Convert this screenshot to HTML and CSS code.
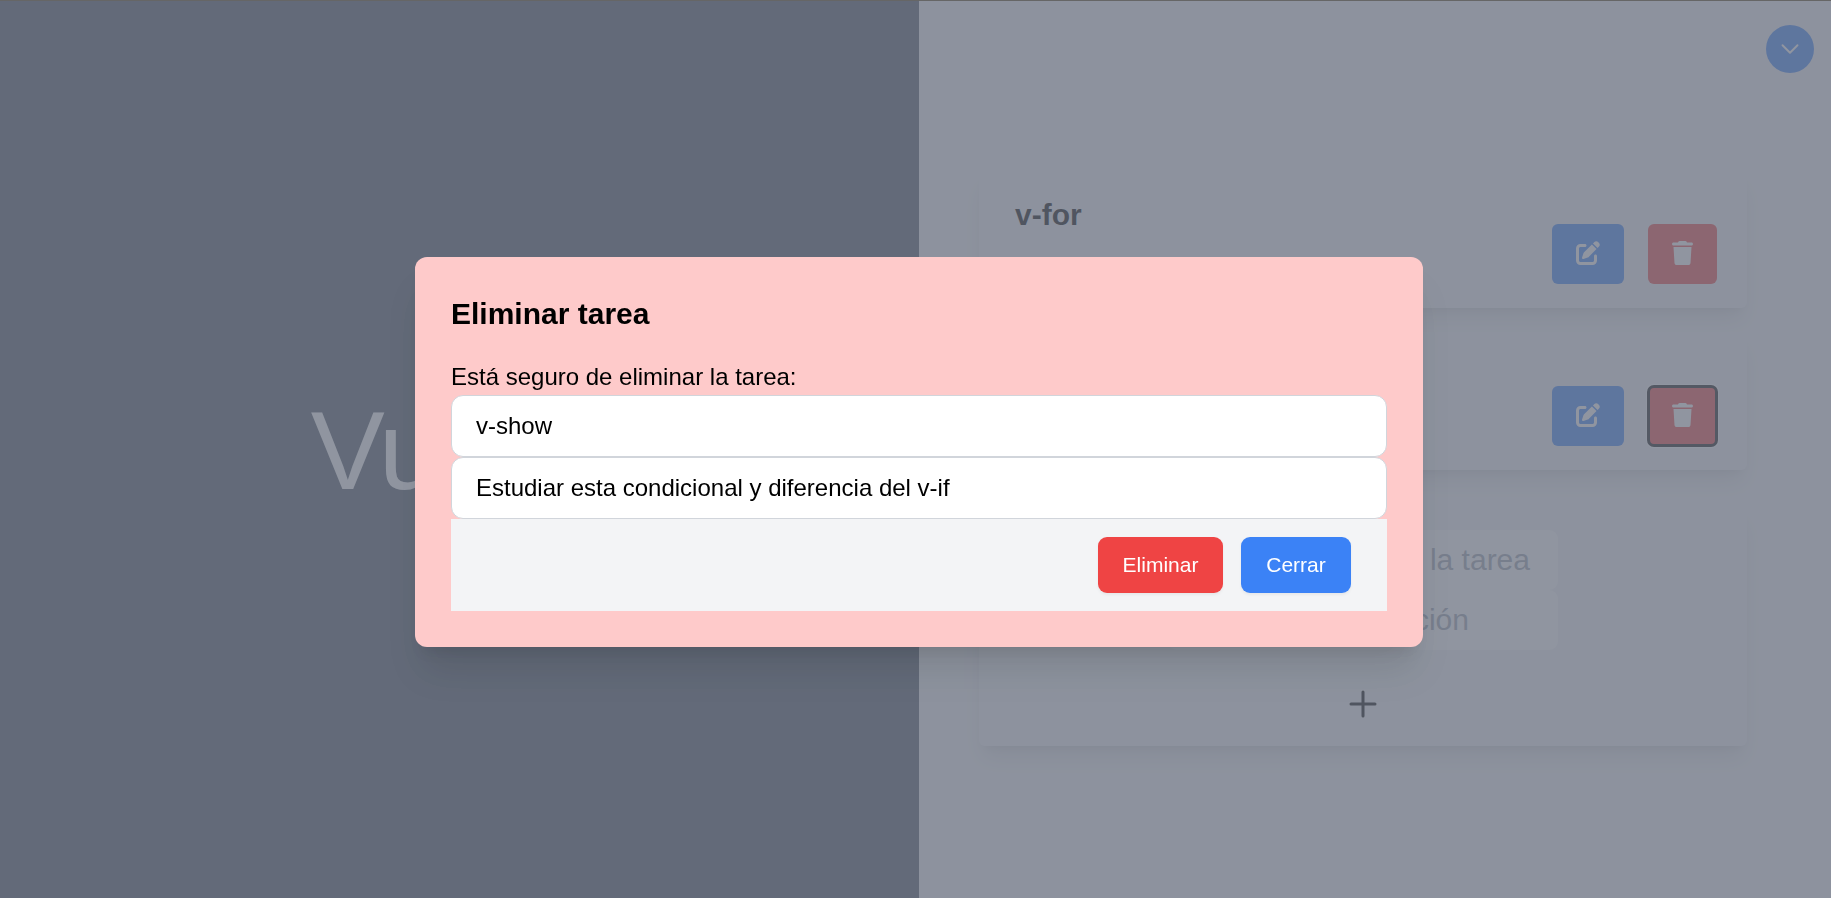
FILE: index.html
```html
<!DOCTYPE html>
<html lang="es">
<head>
<meta charset="utf-8">
<title>Vue.js</title>
<link rel="stylesheet" href="styles.css">
</head>
<body>
<svg class="sprite" aria-hidden="true">
  <symbol id="edit" viewBox="0 0 512 512"><path d="M471.6 21.7c-21.9-21.9-57.3-21.9-79.2 0L362.3 51.7l97.9 97.9 30.1-30.1c21.9-21.9 21.9-57.3 0-79.2L471.6 21.7zm-299.2 220c-6.1 6.1-10.8 13.6-13.5 21.9l-29.6 88.8c-2.9 8.6-.6 18.1 5.8 24.6s15.9 8.7 24.6 5.8l88.8-29.6c8.2-2.7 15.7-7.4 21.9-13.5L437.7 172.3 339.7 74.3 172.4 241.7zM96 64C43 64 0 107 0 160V416c0 53 43 96 96 96H352c53 0 96-43 96-96V320c0-17.7-14.3-32-32-32s-32 14.3-32 32v96c0 17.7-14.3 32-32 32H96c-17.7 0-32-14.3-32-32V160c0-17.7 14.3-32 32-32h96c17.7 0 32-14.3 32-32s-14.3-32-32-32H96z"/></symbol>
  <symbol id="trash" viewBox="0 0 448 512"><path d="M135.2 17.7L128 32H32C14.3 32 0 46.3 0 64S14.3 96 32 96H416c17.7 0 32-14.3 32-32s-14.3-32-32-32H320l-7.2-14.3C307.4 6.8 296.3 0 284.2 0H163.8c-12.1 0-23.2 6.8-28.6 17.7zM416 128H32L53.2 467c1.6 25.3 22.6 45 47.9 45H346.9c25.3 0 46.3-19.7 47.9-45L416 128z"/></symbol>
</svg>
<div class="page">
  <section class="hero"><h1 class="hero-title">Vue.js</h1></section>
  <section class="tasks">
    <button class="toggle" aria-label="Menú"><svg viewBox="0 0 24 24"><path d="M19.5 8.25l-7.5 7.5-7.5-7.5"/></svg></button>
    <article class="card">
      <h2 class="card-title">v-for</h2>
      <div class="actions">
        <button class="btn-icon blue" aria-label="Editar"><svg class="ico-edit"><use href="#edit"/></svg></button>
        <button class="btn-icon red" aria-label="Eliminar"><svg class="ico-trash"><use href="#trash"/></svg></button>
      </div>
    </article>
    <article class="card">
      <h2 class="card-title">v-show</h2>
      <div class="actions">
        <button class="btn-icon blue" aria-label="Editar"><svg class="ico-edit"><use href="#edit"/></svg></button>
        <button class="btn-icon red focused" aria-label="Eliminar"><svg class="ico-trash"><use href="#trash"/></svg></button>
      </div>
    </article>
    <article class="card form">
      <div class="field">Título de la tarea</div>
      <div class="field desc">Descripción</div>
      <button class="add" aria-label="Agregar"><svg viewBox="0 0 24 24"><path d="M12 4v16m8-8H4"/></svg></button>
    </article>
  </section>
</div>
<div class="overlay">
  <div class="modal">
    <h3 class="modal-title">Eliminar tarea</h3>
    <p class="modal-text">Está seguro de eliminar la tarea:</p>
    <div class="value">v-show</div>
    <div class="value">Estudiar esta condicional y diferencia del v-if</div>
    <footer class="modal-footer">
      <button class="btn red">Eliminar</button>
      <button class="btn blue btn-close">Cerrar</button>
    </footer>
  </div>
</div>
</body>
</html>
```
FILE: styles.css
```css
* { box-sizing: border-box; margin: 0; padding: 0; }
html, body { height: 100%; overflow: hidden; }
body { font-family: "Liberation Sans", Arial, sans-serif; color: #000; }
button { border: 0; background: none; font: inherit; color: #fff; display: flex; align-items: center; justify-content: center; }
.sprite { position: absolute; width: 0; height: 0; }
.blue { background: #3b82f6; }
.red { background: #ef4444; }

.page { display: flex; height: 898px; }
.hero { width: 919px; background: #4b5563; display: flex; align-items: center; justify-content: center; padding: 4px 5px 0 0; }
.hero-title { font-size: 111px; font-weight: 400; line-height: 1; color: #fff; letter-spacing: -2px; }
.tasks { flex: 1; background: #f3f4f6; padding: 170px 84px 0 60px; display: flex; flex-direction: column; gap: 24px; }

.toggle { position: absolute; top: 25px; right: 17px; width: 48px; height: 48px; border-radius: 50%; background: #3b82f6; }
.toggle svg { width: 24px; height: 24px; fill: none; stroke: #fff; stroke-width: 1.9; stroke-linecap: round; stroke-linejoin: round; }

.card { height: 138px; border-radius: 6px; background: #f3f4f6; padding: 22px 30px 24px 36px; display: flex; justify-content: space-between; box-shadow: 0 15px 22.5px -4.5px rgba(0,0,0,.1), 0 6px 9px -6px rgba(0,0,0,.1); }
.card-title { font-size: 30px; line-height: 45px; }
.actions { display: flex; gap: 24px; align-items: flex-end; }
.btn-icon { height: 60px; padding: 0 24px 2px; border-radius: 6px; }
.btn-icon svg { height: 24px; fill: #fff; }
.ico-edit { width: 24px; }
.ico-trash { width: 21px; }
.focused { outline: 3px solid #101010; outline-offset: -2px; box-shadow: 0 0 0 2px #fff; }

.form { height: 240px; margin-top: 12px; padding: 24px 0; flex-direction: column; align-items: center; justify-content: flex-start; }
.field { width: 390px; height: 60px; border-radius: 9px; background: #fff; padding-right: 28px; font-size: 30px; line-height: 60px; text-align: right; color: #9ca3af; }
.desc { padding-right: 89px; }
.add { margin-top: 36px; }
.add svg { width: 36px; height: 36px; fill: none; stroke: #000; stroke-width: 2; stroke-linecap: round; }

.overlay { position: fixed; inset: 0; background: rgba(107,114,128,.75); border-top: 1px solid #666; padding: 256px 408px 0 415px; }
.modal { height: 390px; border-radius: 12px; background: #fecaca; padding: 36px; box-shadow: 0 30px 37.5px -7.5px rgba(0,0,0,.1), 0 12px 15px -9px rgba(0,0,0,.1); }
.modal-title { font-size: 30px; line-height: 42px; margin-bottom: 24px; }
.modal-text { font-size: 24px; line-height: 36px; }
.value { height: 62px; border: 1px solid #d1d5db; border-radius: 12px; background: #fff; padding: 0 24px; font-size: 24px; line-height: 60px; }
.modal-footer { height: 92px; background: #f3f4f6; padding: 18px 36px; display: flex; gap: 18px; justify-content: flex-end; }
.btn { width: 125px; height: 56px; border-radius: 9px; font-size: 21px; box-shadow: 0 1.5px 3px rgba(0,0,0,.05); }
.btn-close { width: 110px; }
```
